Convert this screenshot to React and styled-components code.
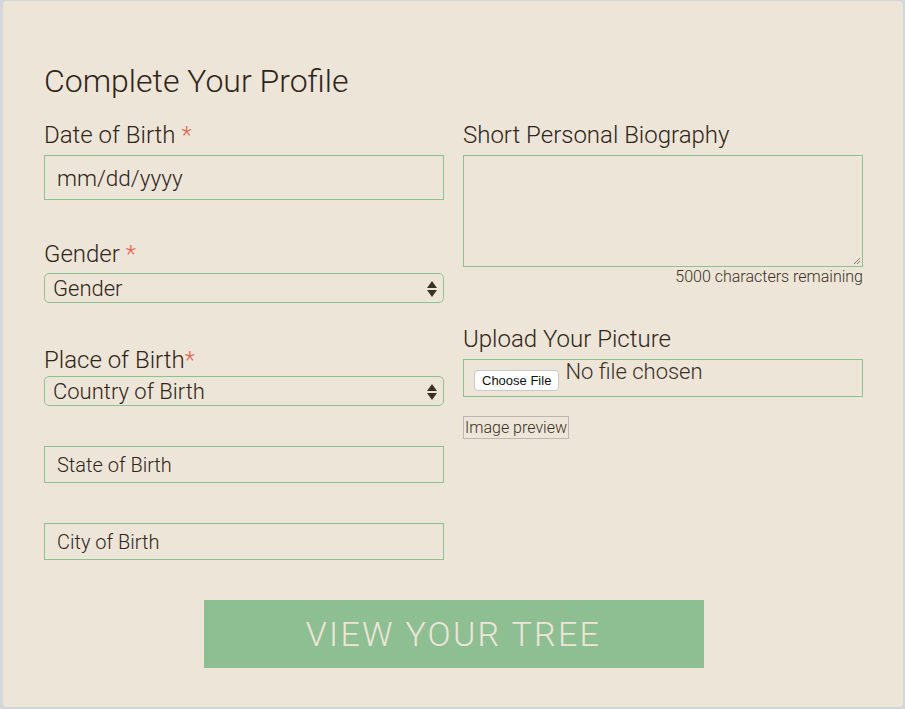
import React from "react";
import styled, { createGlobalStyle } from "styled-components";

const Global = createGlobalStyle`
  html, body { margin: 0; padding: 0; }
  body {
    background: #d4d7da;
    font-family: Roboto, "Noto Sans", "Liberation Sans", sans-serif;
    color: #3b3024;
  }
`;

const Card = styled.div`
  box-sizing: border-box;
  width: 900px;
  height: 706px;
  margin: 1px 0 0 3px;
  background: #ede5d8;
  border-radius: 4px;
  padding: 60px 41px 0 41px;
  display: flex;
  flex-direction: column;
`;

const Title = styled.h1`
  margin: 0 0 20px 0;
  font-size: 32px;
  font-weight: 300;
  line-height: 40px;
  color: #30251a;
`;

const Columns = styled.div`
  display: grid;
  grid-template-columns: 400px 400px;
  column-gap: 19px;
`;

const Column = styled.div`
  display: flex;
  flex-direction: column;
`;

const Field = styled.div`
  display: flex;
  flex-direction: column;
  margin-bottom: ${(p) => p.$mb || 0}px;
`;

const Label = styled.label`
  font-size: 24px;
  font-weight: 300;
  line-height: 28px;
  margin-bottom: ${(p) => p.$mb ?? 6}px;
  color: #30251a;
`;

const Star = styled.span`
  color: #e9604f;
  margin-left: ${(p) => (p.$tight ? 0 : 6)}px;
`;

const TextBox = styled.div`
  box-sizing: border-box;
  height: ${(p) => p.$h}px;
  border: 1px solid #8cc191;
  display: flex;
  align-items: center;
  padding-left: ${(p) => p.$pl || 12}px;
  font-size: ${(p) => p.$fs || 20}px;
  font-weight: 300;
  color: #30251a;
`;

const SelectBox = styled.div`
  position: relative;
  box-sizing: border-box;
  height: 30px;
  border: 1px solid #8cc191;
  border-radius: 5px;
  display: flex;
  align-items: center;
  padding-left: 8px;
  font-size: 22px;
  font-weight: 300;
  color: #30251a;
`;

const Arrows = styled.svg`
  position: absolute;
  right: 4px;
  top: 6px;
`;

const TextArea = styled.div`
  position: relative;
  box-sizing: border-box;
  height: 112px;
  border: 1px solid #8cc191;
`;

const Grip = styled.svg`
  position: absolute;
  right: 1px;
  bottom: 1px;
`;

const Counter = styled.div`
  align-self: flex-end;
  font-size: 16px;
  font-weight: 300;
  line-height: 20px;
`;

const FileBox = styled.div`
  box-sizing: border-box;
  height: 38px;
  border: 1px solid #8cc191;
  display: flex;
  align-items: flex-start;
  padding: 0 0 0 10px;
`;

const ChooseButton = styled.div`
  margin-top: 10px;
  box-sizing: border-box;
  height: 21px;
  padding: 0 7px;
  background: #fff;
  border: 1px solid #c8c8c8;
  border-radius: 4px;
  font-family: "Liberation Sans", Arial, sans-serif;
  font-size: 13px;
  line-height: 19px;
  color: #111;
`;

const FileText = styled.span`
  margin-left: 6px;
  margin-top: -1px;
  font-size: 22px;
  font-weight: 300;
  line-height: 26px;
`;

const Preview = styled.div`
  align-self: flex-start;
  margin-top: 19px;
  box-sizing: border-box;
  height: 23px;
  border: 1px solid #bdb7b0;
  padding: 0 1px;
  font-size: 16px;
  font-weight: 300;
  line-height: 21px;
`;

const ButtonRow = styled.div`
  display: flex;
  justify-content: center;
  margin-top: 40px;
`;

const Submit = styled.button`
  width: 500px;
  height: 68px;
  border: none;
  background: #8dbf93;
  color: #ede5d8;
  font-family: Roboto, "Noto Sans", sans-serif;
  font-size: 34px;
  font-weight: 300;
  letter-spacing: 2.3px;
  padding: 0;
  margin-left: 1px;
`;

function UpDown() {
  return (
    <Arrows width="14" height="18" viewBox="0 0 14 18">
      <path d="M7 1 L12 8 L2 8 Z" fill="#3b3024" />
      <path d="M2 10 L12 10 L7 17 Z" fill="#3b3024" />
    </Arrows>
  );
}

export default function App() {
  return (
    <>
      <Global />
      <Card>
        <Title>Complete Your Profile</Title>
        <Columns>
          <Column>
            <Field $mb={40}>
              <Label>
                Date of Birth<Star>*</Star>
              </Label>
              <TextBox $h={45} $fs={22.5}>mm/dd/yyyy</TextBox>
            </Field>
            <Field $mb={43}>
              <Label $mb={5}>
                Gender<Star>*</Star>
              </Label>
              <SelectBox>
                Gender
                <UpDown />
              </SelectBox>
            </Field>
            <Field $mb={40}>
              <Label $mb={2}>
                Place of Birth<Star $tight>*</Star>
              </Label>
              <SelectBox>
                Country of Birth
                <UpDown />
              </SelectBox>
            </Field>
            <Field $mb={40}>
              <TextBox $h={37} $fs={20}>State of Birth</TextBox>
            </Field>
            <Field>
              <TextBox $h={37} $fs={20}>City of Birth</TextBox>
            </Field>
          </Column>
          <Column>
            <Field $mb={38}>
              <Label>Short Personal Biography</Label>
              <TextArea>
                <Grip width="10" height="10" viewBox="0 0 10 10">
                  <path d="M9 3 L3 9 M9 6 L6 9" stroke="#777" strokeWidth="1" />
                </Grip>
              </TextArea>
              <Counter>5000 characters remaining</Counter>
            </Field>
            <Field>
              <Label>Upload Your Picture</Label>
              <FileBox>
                <ChooseButton>Choose File</ChooseButton>
                <FileText>No file chosen</FileText>
              </FileBox>
              <Preview>Image preview</Preview>
            </Field>
          </Column>
        </Columns>
        <ButtonRow>
          <Submit>VIEW YOUR TREE</Submit>
        </ButtonRow>
      </Card>
    </>
  );
}
